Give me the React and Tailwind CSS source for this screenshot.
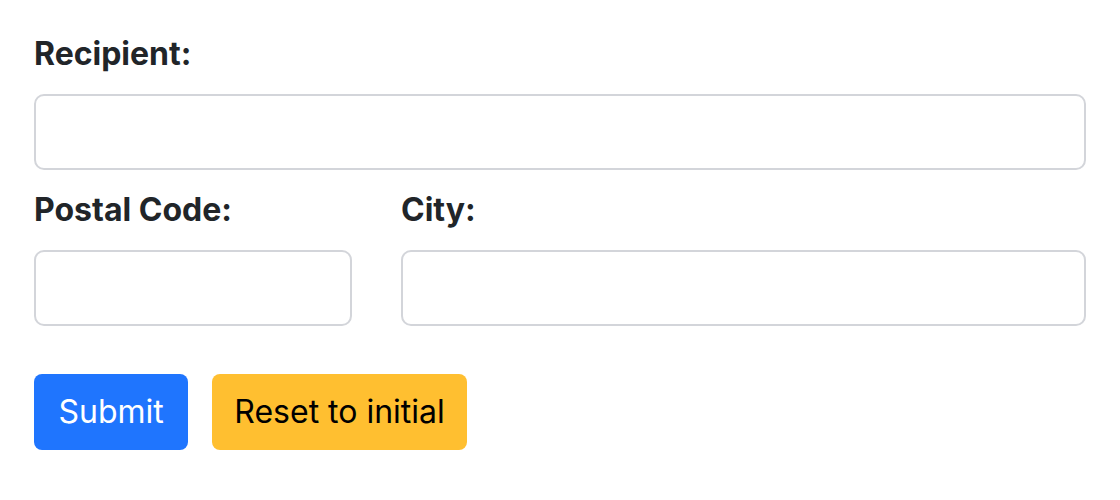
import { useState } from 'react';

const INITIAL = { recipient: '', postalCode: '', city: '' };

// ── Field ──
function Field({ label, value, onChange, className = '' }) {
  return (
    <div className={className}>
      <label className="block text-[32px] leading-[48px] font-bold text-[#212529] mb-4">
        {label}
      </label>
      <input
        type="text"
        value={value}
        onChange={(e) => onChange(e.target.value)}
        className="block w-full h-[76px] px-6 text-[32px] bg-white border-2 border-[#d3d5da]
                   rounded-[10px] outline-none text-[#212529]"
      />
    </div>
  );
}

export default function App() {
  const [form, setForm] = useState(INITIAL);
  const set = (key) => (v) => setForm((f) => ({ ...f, [key]: v }));

  return (
    <div
      className="min-h-[500px] bg-white pl-[34px] pr-[34px] pt-[30px]"
      style={{ fontFamily: 'Inter, "Noto Sans", "Liberation Sans", sans-serif' }}
    >
      <form onSubmit={(e) => e.preventDefault()} className="w-[1052px]">
        <Field label="Recipient:" value={form.recipient} onChange={set('recipient')} />

        <div className="flex gap-[49px] mt-4">
          <Field
            label="Postal Code:"
            value={form.postalCode}
            onChange={set('postalCode')}
            className="w-[318px] shrink-0"
          />
          <Field label="City:" value={form.city} onChange={set('city')} className="flex-1" />
        </div>

        <div className="flex gap-6 mt-12">
          <button
            type="submit"
            className="h-[76px] px-[24.5px] rounded-[8px] bg-[#1f75fe] text-white text-[32px]"
          >
            Submit
          </button>
          <button
            type="button"
            onClick={() => setForm(INITIAL)}
            className="h-[76px] px-[22px] rounded-[8px] bg-[#ffbf30] text-black text-[32px]"
          >
            Reset to initial
          </button>
        </div>
      </form>
    </div>
  );
}
